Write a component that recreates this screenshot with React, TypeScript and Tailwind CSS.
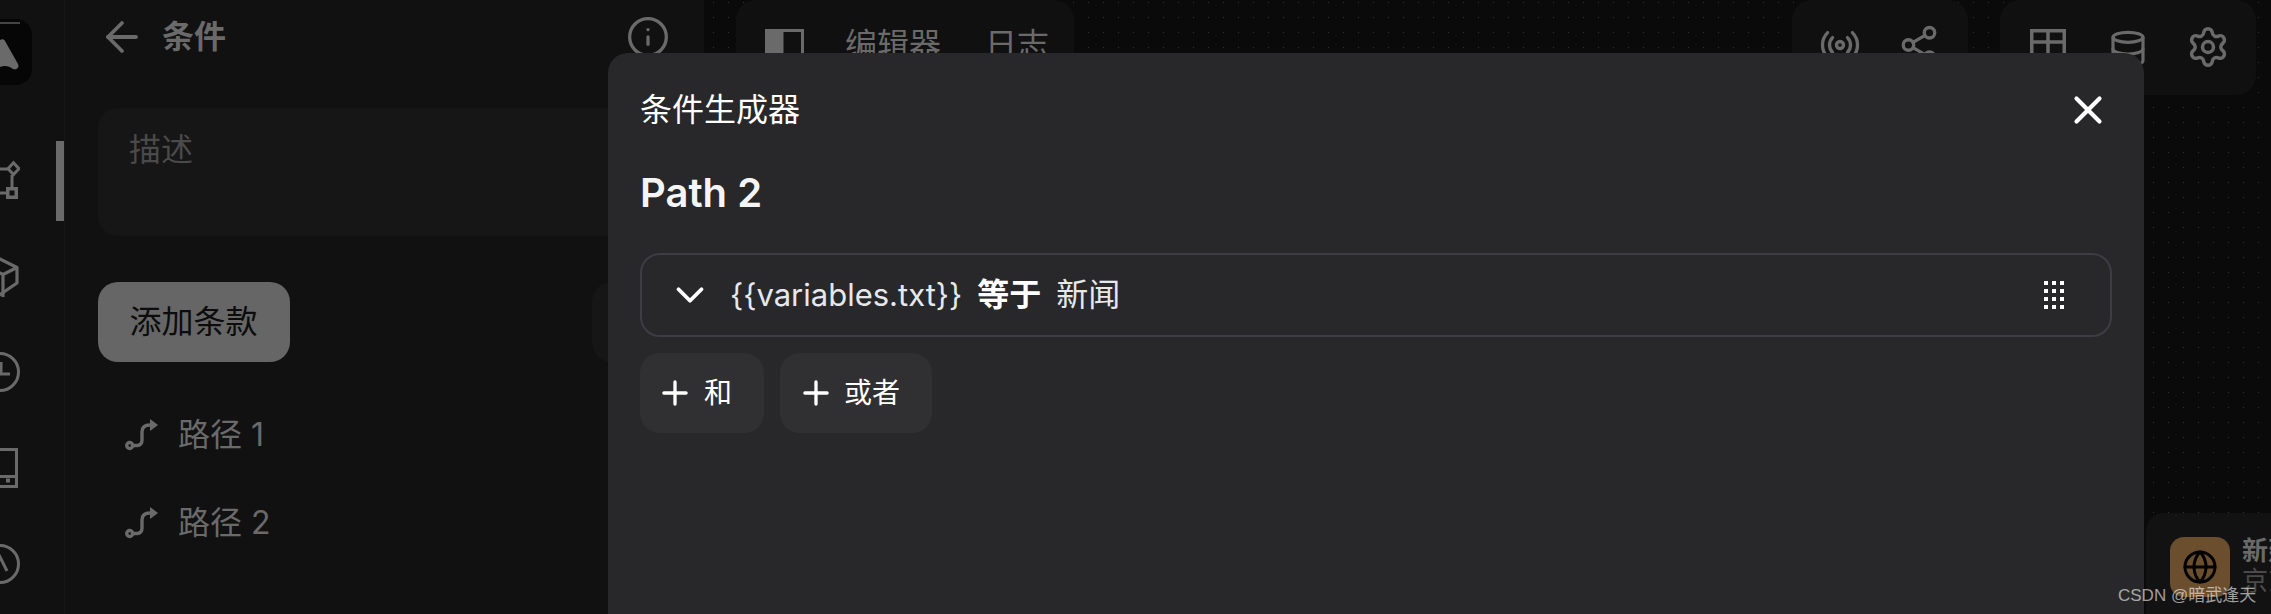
import React from "react";
import { ArrowLeft, Info, Radio, Share2, Database, Settings, X, ChevronDown, Plus, Globe } from "lucide-react";

const FONT = "[font-family:Inter,'Noto_Sans_CJK_SC',sans-serif]";
const ICON = "#6a6a6a";

function Route() {
  return (
    <svg width="33" height="32" viewBox="0 0 33 32" fill="none" stroke={ICON} strokeWidth="3.4" className="shrink-0">
      <circle cx="4.7" cy="26.5" r="3" />
      <path d="M8 26.5 H12 Q17 26.5 17 21 V13 Q17 6 25 6" />
      <path d="M25 0 L33 6 L25 12 Z" fill={ICON} stroke="none" />
    </svg>
  );
}

function Logo() {
  return (
    <svg width="64" height="66" viewBox="0 0 64 66" fill="none" className="block">
      <path d="M32 4 H52" stroke="#5a5a5a" strokeWidth="1.5" />
      <path d="M32 21 C34 20 36 20 37 22 L50 45 C52 49 48 51 45 50 C41 47 37 46 32 48 Z" fill={ICON} />
    </svg>
  );
}

function RailGraph() {
  return (
    <svg width="40" height="40" viewBox="0 0 40 40" fill="none" stroke={ICON} strokeWidth="3">
      <path d="M33.5 2.8 L39 8.7 L33.5 14.6 L28 8.7 Z" />
      <path d="M32 15 V27" />
      <rect x="27.75" y="28.75" width="8.5" height="8.5" strokeWidth="3.5" />
      <path d="M0 9 H28 M0 33 H26" />
    </svg>
  );
}

function RailBox() {
  return (
    <svg width="40" height="42" viewBox="0 0 40 42" fill="none" stroke={ICON} strokeWidth="3.2" strokeLinejoin="round">
      <path d="M18 2 L37 11.5 V27 L18 40" />
      <path d="M37 11.5 L23 18.5 V41 M23 18.5 L16 15" />
    </svg>
  );
}

function RailTablet() {
  return (
    <svg width="40" height="40" viewBox="0 0 40 40" fill="none" stroke={ICON} strokeWidth="3">
      <rect x="2" y="1.5" width="34.5" height="37" />
      <path d="M2 28.5 H36.5" />
      <rect x="26" y="30.5" width="4" height="4" fill={ICON} stroke="none" />
    </svg>
  );
}

function RailClock({ history }: { history?: boolean }) {
  return (
    <svg width="40" height="40" viewBox="0 0 40 40" fill="none" stroke={ICON} strokeWidth="3">
      <circle cx="20" cy="20" r="18.5" />
      {history ? <path d="M19 11 L27 27" /> : <path d="M21 10 V22 H30" />}
    </svg>
  );
}

function TableIcon() {
  return (
    <svg width="36" height="36" viewBox="0 0 36 36" fill="none" stroke={ICON} strokeWidth="3.5">
      <rect x="1.75" y="1.75" width="32.5" height="32.5" />
      <path d="M1.75 13 H34.25 M18 1.75 V34.25" />
    </svg>
  );
}

function PanelIcon() {
  return (
    <svg width="39" height="39" viewBox="0 0 39 39" fill="none">
      <rect x="1.5" y="1.5" width="36" height="36" stroke={ICON} strokeWidth="3" />
      <rect x="1.5" y="1.5" width="17" height="36" fill={ICON} />
    </svg>
  );
}

function GripIcon() {
  return (
    <div className="grid grid-cols-3 gap-x-1 gap-y-1 w-5 shrink-0">
      {Array.from({ length: 12 }).map((_, i) => (
        <span key={i} className="w-1 h-1 bg-white" />
      ))}
    </div>
  );
}

export default function App() {
  return (
    <div className={`${FONT} relative flex w-[2271px] h-[614px] overflow-hidden bg-[#111111]`}>
      {/* rail */}
      <div className="relative w-[65px] h-full shrink-0 overflow-hidden border-r border-[#181818] bg-[#111111] flex flex-col">
        <div className="mt-[19px] -ml-8 w-16 h-[66px] shrink-0 rounded-2xl bg-[#060606]">
          <Logo />
        </div>
        <div className="mt-[75px] -ml-5 flex flex-col gap-14">
          <RailGraph />
          <div className="h-10"><RailBox /></div>
          <RailClock />
          <RailTablet />
          <RailClock history />
        </div>
        <div className="absolute right-0 top-[141px] w-2 h-20 bg-[#6a6a6a]" />
      </div>

      {/* side panel */}
      <div className="w-[639px] h-full shrink-0 pl-[33px] pr-9 bg-[#111111] flex flex-col">
        <div className="h-[74px] flex items-start pt-[19px] pl-2">
          <ArrowLeft size={48} color={ICON} strokeWidth={1.9} className="-ml-2 -mt-1.5" />
          <span className="ml-4 text-[32px] leading-[36px] font-bold text-[#6a6a6a]">条件</span>
          <Info size={44} color={ICON} strokeWidth={1.8} className="ml-auto -mr-0.5 -mt-1" />
        </div>
        <div className="mt-[34px] h-[128px] rounded-[20px] bg-[#161616] pl-[31px] pt-5 text-[32px] leading-[44px] text-[#4a4a4a]">描述</div>
        <div className="mt-[46px] flex justify-between">
          <div className="h-20 w-48 rounded-[20px] bg-[#666666] flex items-center justify-center pr-px text-[32px] text-[#0c0c0c]">添加条款</div>
          <div className="h-20 w-[76px] rounded-[20px] bg-[#161616]" />
        </div>
        <div className="mt-[51px] pl-[27px] flex flex-col gap-[44px] text-[32px] leading-[44px] text-[#6a6a6a]">
          <div className="flex items-center gap-5"><Route /><span>路径 1</span></div>
          <div className="flex items-center gap-5"><Route /><span>路径 2</span></div>
        </div>
      </div>

      {/* canvas */}
      <div className="relative flex-1 h-full bg-[#0a0a0a] bg-[radial-gradient(circle,#333333_0.8px,transparent_1px)] bg-[length:15px_15px] bg-[position:2px_-5px]">
        <div className="flex pl-8 pr-[15px]">
          <div className="w-[338px] h-[95px] rounded-[20px] bg-[#101010] flex items-start pt-[29px] pl-[29px]">
            <PanelIcon />
            <span className="ml-[41px] -mt-1.5 text-[32px] leading-[44px] text-[#6a6a6a]">编辑器</span>
            <span className="ml-11 -mt-1.5 text-[32px] leading-[44px] text-[#6a6a6a]">日志</span>
          </div>
          <div className="ml-auto w-44 h-[95px] rounded-[20px] bg-[#101010] flex items-start pt-[24px] pl-[27px] gap-[37px]">
            <Radio size={42} color={ICON} strokeWidth={1.9} />
            <Share2 size={42} color={ICON} strokeWidth={1.9} />
          </div>
          <div className="ml-8 w-64 h-[95px] rounded-[20px] bg-[#101010] flex items-start pt-[29px] pl-[30px]">
            <TableIcon />
            <Database size={40} color={ICON} strokeWidth={1.9} className="ml-[42px]" />
            <Settings size={44} color={ICON} strokeWidth={1.9} className="ml-[38px] -mt-1" />
          </div>
        </div>

        <div className="absolute left-[1442px] top-[513px] w-[200px] h-[120px] rounded-[18px] bg-[#121212] flex items-start pl-6 pt-6 overflow-hidden">
          <div className="w-[60px] h-[60px] shrink-0 rounded-[14px] bg-[#6b4e2d] flex items-center justify-center">
            <Globe size={36} color="#000" strokeWidth={2} />
          </div>
          <div className="ml-3 -mt-[1px] text-[26px] leading-[30px] whitespace-nowrap">
            <div className="font-bold text-[#6a6a6a]">新建</div>
            <div className="text-[#4a4a4a]">京东</div>
          </div>
        </div>
      </div>

      {/* modal */}
      <div className="absolute left-[608px] top-[53px] w-[1536px] h-[600px] rounded-[20px] bg-[#28282b] pl-8 pr-8 text-white">
        <div className="flex items-center justify-between pt-[35px] h-[78px]">
          <span className="text-[32px] leading-[44px]">条件生成器</span>
          <X size={46} color="#fff" strokeWidth={2.2} className="mr-px" />
        </div>
        <div className="mt-[38px] text-[40px] leading-[48px] font-semibold text-[#f5f5f5]">Path 2</div>
        <div className="mt-9 h-[84px] rounded-[20px] border-2 border-[#3d3d45] flex items-center pl-[25px] pr-[46px]">
          <ChevronDown size={46} color="#fff" strokeWidth={2} />
          <span className="ml-[17px] text-[31px] leading-[44px] text-[#e6e8ee]">{"{{variables.txt}}"}</span>
          <span className="ml-[15px] text-[32px] leading-[44px] font-bold">等于</span>
          <span className="ml-[15px] text-[32px] leading-[44px] text-[#e6e8ee]">新闻</span>
          <div className="ml-auto"><GripIcon /></div>
        </div>
        <div className="mt-4 flex gap-4">
          <div className="w-[124px] h-20 rounded-[20px] bg-[#303033] flex items-center pl-4">
            <Plus size={38} color="#fff" strokeWidth={2.1} />
            <span className="ml-2.5 text-[28px]">和</span>
          </div>
          <div className="w-[152px] h-20 rounded-[20px] bg-[#303033] flex items-center pl-[17px]">
            <Plus size={38} color="#fff" strokeWidth={2.1} />
            <span className="ml-[9px] text-[28px]">或者</span>
          </div>
        </div>
      </div>

      {/* watermark */}
      <span className="absolute left-[2118px] top-[584px] text-[17px] leading-[24px] text-white/60 [font-family:'Liberation_Sans','Noto_Sans_CJK_SC',sans-serif]">CSDN @暗武逢天</span>
    </div>
  );
}
